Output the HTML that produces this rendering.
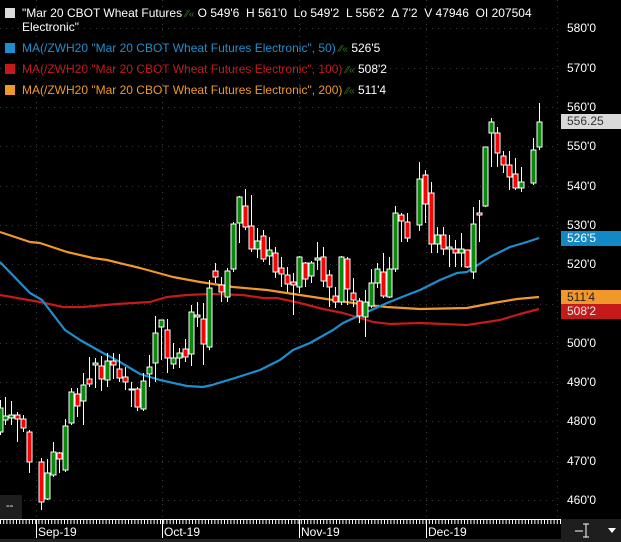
<!DOCTYPE html>
<html><head><meta charset="utf-8"><style>
html,body{margin:0;padding:0;background:#000;}
body{width:621px;height:542px;overflow:hidden;position:relative;font-family:"Liberation Sans",sans-serif;}
svg{position:absolute;left:0;top:0}
.lg{position:absolute;left:5px;font-size:12px;white-space:nowrap;line-height:14px}
.sq{display:inline-block;width:10px;height:10px;margin-right:7px;vertical-align:-1px}
.ax{position:absolute;left:567px;font-size:12px;color:#fff}
.tag{position:absolute;left:561px;width:60px;height:15px;font-size:12px;line-height:15px;padding-left:6px;box-sizing:border-box}
.ic{color:#2e7d1e;font-size:10px}
</style></head><body>
<svg width="621" height="542" viewBox="0 0 621 542">
<g stroke="#3a3a3a" stroke-width="1" stroke-dasharray="1,5">
<line x1="0" y1="28.5" x2="557" y2="28.5"/><line x1="0" y1="68.5" x2="557" y2="68.5"/><line x1="0" y1="107.5" x2="557" y2="107.5"/><line x1="0" y1="146.5" x2="557" y2="146.5"/><line x1="0" y1="186.5" x2="557" y2="186.5"/><line x1="0" y1="225.5" x2="557" y2="225.5"/><line x1="0" y1="264.5" x2="557" y2="264.5"/><line x1="0" y1="304.5" x2="557" y2="304.5"/><line x1="0" y1="343.5" x2="557" y2="343.5"/><line x1="0" y1="382.5" x2="557" y2="382.5"/><line x1="0" y1="421.5" x2="557" y2="421.5"/><line x1="0" y1="461.5" x2="557" y2="461.5"/><line x1="0" y1="500.5" x2="557" y2="500.5"/>
<line x1="36.5" y1="0" x2="36.5" y2="519"/><line x1="162.5" y1="0" x2="162.5" y2="519"/><line x1="299.5" y1="0" x2="299.5" y2="519"/><line x1="426.5" y1="0" x2="426.5" y2="519"/><line x1="557.5" y1="0" x2="557.5" y2="519"/>
</g>
<g fill="none" stroke-width="2.2" stroke-linejoin="round">
<polyline stroke="#f0982a" points="0,232 30,242 40,243 67,252 93,258 107,260 140,268 173,277 200,282 233,287 267,290 300,295 333,300 367,305 387,307 420,309 467,308 493,303 517,299 539,297"/>
<polyline stroke="#c41a1a" points="0,295 40,302 63,307 83,307 117,304 150,302 167,297 187,295 210,294 243,295 263,298 277,298 300,303 323,309 343,313 360,318 373,322 390,324 420,323 467,325 500,320 520,314 539,309"/>
<polyline stroke="#1e8fce" points="0,262 30,293 42,300 65,330 80,340 103,353 120,362 140,374 160,380 187,386 203,387 212,385 235,378 260,370 280,360 293,350 310,343 333,330 343,323 367,312 387,303 407,295 420,290 440,280 457,273 467,272 490,257 510,247 527,242 539,238"/>
</g>
<g id="c" stroke="#fff" stroke-width="1"></g>
<line x1="0" y1="519.5" x2="561" y2="519.5" stroke="#fff"/>
<g stroke="#fff" stroke-width="1">
<line x1="36.5" y1="519" x2="36.5" y2="538"/><line x1="162.5" y1="519" x2="162.5" y2="538"/><line x1="299.5" y1="519" x2="299.5" y2="538"/><line x1="426.5" y1="519" x2="426.5" y2="538"/>
</g>
<line x1="0" y1="522" x2="561" y2="522" stroke="#fff" stroke-dasharray="1,2.2" stroke-width="4"/>
<rect x="561" y="519" width="60" height="23" fill="#1e1e1e"/>
<rect x="0" y="539" width="561" height="3" fill="#222"/>
<rect x="0" y="495" width="22" height="24" fill="#1e1e1e"/>
<text x="6" y="509" fill="#fff" font-size="11" font-family="Liberation Sans">--</text>
<g stroke="#fff" fill="none"><line x1="575" y1="531" x2="583" y2="531"/><line x1="586" y1="524" x2="586" y2="537"/><line x1="583" y1="524" x2="589" y2="524"/><line x1="583" y1="537" x2="589" y2="537"/></g>
<polygon points="608,528 616,528 612,533" fill="#fff"/>
</svg>
<script>
var d=[[0,'g',408,432,400,435],[5,'g',416,420,397,425],[11,'g',415,418,401,425],[17,'r',415,419,412,442],[23,'r',419,428,415,432],[29,'r',432,462,430,473],[41,'r',462,502,458,510],[47,'g',473,499,459,500],[53,'g',452,475,442,477],[59,'r',453,459,452,473],[65,'g',426,470,419,472],[71,'g',392,423,388,425],[77,'r',394,406,388,417],[83,'g',385,401,373,425],[89,'r',379,384,357,387],[95,'g',363,365,358,388],[101,'r',366,379,356,391],[107,'g',361,380,353,387],[113,'r',361,365,353,379],[119,'r',369,378,354,382],[125,'r',377,382,367,390],[131,'w',389,389,382,407],[137,'r',389,407,387,411],[143,'g',381,409,373,411],[149,'g',367,374,355,387],[155,'g',333,363,316,382],[161,'g',320,327,320,360],[167,'r',330,358,319,373],[173,'g',358,364,343,369],[179,'g',353,358,348,368],[185,'r',349,357,339,362],[191,'g',312,354,305,366],[197,'g',315,317,302,327],[203,'r',319,344,303,365],[209,'g',288,347,280,350],[215,'r',271,277,263,283],[221,'r',285,292,277,302],[227,'g',271,297,268,302],[233,'g',224,269,222,272],[239,'g',197,223,196,243],[245,'r',206,227,189,230],[251,'r',226,249,195,252],[257,'g',241,249,228,258],[263,'r',236,259,230,262],[269,'g',250,256,237,265],[275,'r',253,272,247,278],[281,'r',268,274,257,287],[287,'r',275,284,267,292],[293,'r',282,285,273,315],[299,'g',257,287,256,293],[305,'r',263,279,262,287],[311,'g',263,276,261,283],[317,'g',258,260,242,270],[323,'r',257,281,247,287],[329,'r',275,287,270,307],[335,'r',296,302,287,308],[341,'g',257,302,256,305],[347,'r',259,289,257,305],[353,'r',293,300,278,307],[359,'r',301,316,298,323],[365,'g',302,317,290,337],[371,'g',283,306,269,308],[377,'g',269,283,263,288],[383,'r',272,296,253,298],[389,'g',269,297,257,298],[395,'g',213,269,206,272],[401,'r',215,221,213,242],[407,'r',222,238,213,242],[419,'g',179,225,162,231],[425,'r',175,204,170,223],[431,'r',193,244,182,253],[437,'g',235,244,227,253],[443,'r',235,249,227,255],[449,'g',247,249,235,267],[455,'r',249,253,240,267],[461,'g',249,253,233,267],[467,'r',250,267,250,268],[473,'g',224,272,207,279],[479,'r',213,215,200,242],[485,'g',147,206,147,207],[491,'g',122,133,118,167],[497,'r',133,153,127,167],[503,'r',156,165,151,173],[509,'r',165,177,151,190],[515,'r',174,188,158,190],[521,'g',182,188,167,192],[533,'g',150,183,138,185],[539,'g',122,147,103,150]];
var s='',col={g:'#0a8a0a',r:'#ff0000',w:'#fff'};
d.forEach(function(c){var x=c[0]+0.5;s+='<line x1="'+x+'" y1="'+c[4]+'" x2="'+x+'" y2="'+c[5]+'"/>';s+='<rect x="'+(x-2.5)+'" y="'+c[2]+'" width="5" height="'+Math.max(1,c[3]-c[2])+'" fill="'+col[c[1]]+'"/>';});
document.getElementById('c').innerHTML=s;
</script>
<div class="lg" style="top:6px;color:#fff"><span class="sq" style="background:#ddd"></span>"Mar 20 CBOT Wheat Futures <span class="ic">⁄⁄«</span> O 549'6&nbsp; H 561'0&nbsp; Lo 549'2&nbsp; L 556'2&nbsp; Δ 7'2&nbsp; V 47946&nbsp; OI 207504</div>
<div class="lg" style="top:20px;left:22px;color:#fff">Electronic"</div>
<div class="lg" style="top:41px;color:#1e8fce"><span class="sq" style="background:#1e8fce"></span>MA(/ZWH20 "Mar 20 CBOT Wheat Futures Electronic", 50) <span class="ic">⁄⁄«</span> <span style="color:#fff">526'5</span></div>
<div class="lg" style="top:62px;color:#c41a1a"><span class="sq" style="background:#c41a1a"></span>MA(/ZWH20 "Mar 20 CBOT Wheat Futures Electronic", 100) <span class="ic">⁄⁄«</span> <span style="color:#fff">508'2</span></div>
<div class="lg" style="top:83px;color:#f0982a"><span class="sq" style="background:#f0982a"></span>MA(/ZWH20 "Mar 20 CBOT Wheat Futures Electronic", 200) <span class="ic">⁄⁄«</span> <span style="color:#fff">511'4</span></div>
<div class="ax" style="top:21px">580'0</div><div class="ax" style="top:61px">570'0</div><div class="ax" style="top:100px">560'0</div><div class="ax" style="top:139px">550'0</div><div class="ax" style="top:179px">540'0</div><div class="ax" style="top:218px">530'0</div><div class="ax" style="top:257px">520'0</div><div class="ax" style="top:336px">500'0</div><div class="ax" style="top:375px">490'0</div><div class="ax" style="top:414px">480'0</div><div class="ax" style="top:454px">470'0</div><div class="ax" style="top:493px">460'0</div>
<div class="tag" style="top:114px;background:#d9d9d9;color:#333">556.25</div>
<div class="tag" style="top:231px;background:#1288c4;color:#fff">526'5</div>
<div class="tag" style="top:290px;background:#f0982a;color:#222">511'4</div>
<div class="tag" style="top:304px;background:#c41a1a;color:#eee">508'2</div>
<div style="position:absolute;top:525px;left:38px;font-size:12px;color:#fff">Sep-19</div>
<div style="position:absolute;top:525px;left:164px;font-size:12px;color:#fff">Oct-19</div>
<div style="position:absolute;top:525px;left:301px;font-size:12px;color:#fff">Nov-19</div>
<div style="position:absolute;top:525px;left:428px;font-size:12px;color:#fff">Dec-19</div>
</body></html>
